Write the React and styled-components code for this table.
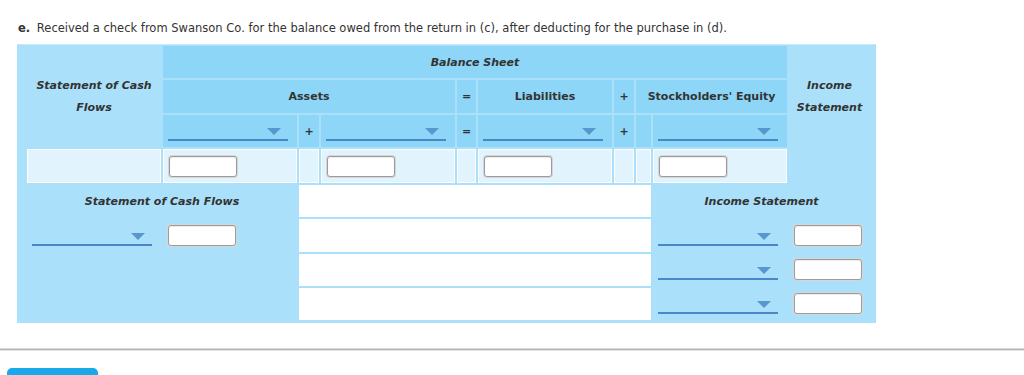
import React from "react";
import styled, { createGlobalStyle } from "styled-components";

const Global = createGlobalStyle`
  html, body { margin: 0; padding: 0; background: #fff; }
  body { font-family: "DejaVu Sans", Verdana, sans-serif; color: #333; }
`;

const Page = styled.div`
  padding-top: 20px;
  overflow: hidden;
  height: 375px;
  box-sizing: border-box;
`;

const Prompt = styled.p`
  margin: 0 0 8px 18px;
  font-size: 11.5px;
  line-height: 16px;
  color: #333;
  strong { margin-right: 3px; }
`;

const Worksheet = styled.div`
  margin-left: 17px;
  width: 859px;
  box-sizing: border-box;
  background: #aae0fa;
  border-top: 1px solid #c4eafc;
  padding: 1px 6px 3px 10px;
  display: grid;
  grid-template-columns: 134px 134px 20px 134px 19px 134px 20px 15px 134px 81px;
  grid-template-rows: 32px 33px 32px 34px 32px 33px 32px 32px;
  gap: 2px;
  font-size: 11px;
`;

const Cell = styled.div`
  grid-column: ${(p) => p.$c};
  grid-row: ${(p) => p.$r};
  min-width: 0;
  box-sizing: border-box;
`;

const SideHead = styled(Cell)`
  display: flex;
  align-items: center;
  justify-content: center;
  text-align: center;
  font-weight: bold;
  font-style: italic;
  line-height: 22px;
`;

const HeadCell = styled(Cell)`
  background: #8dd6f7;
  display: flex;
  align-items: center;
  justify-content: center;
  font-weight: bold;
  font-style: ${(p) => (p.$italic ? "italic" : "normal")};
  white-space: nowrap;
`;

const PickCell = styled(Cell)`
  background: ${(p) => (p.$plain ? "transparent" : "#8dd6f7")};
  display: flex;
  align-items: flex-end;
  justify-content: flex-start;
  padding: 0 0 6px 5px;
`;

const DataCell = styled(Cell)`
  background: #e1f4fd;
  border: 1px solid #fff;
  display: flex;
  align-items: center;
  padding-left: 5px;
`;

const SectionTitle = styled(Cell)`
  display: flex;
  align-items: center;
  justify-content: center;
  font-weight: bold;
  font-style: italic;
`;

const BlankRow = styled(Cell)`
  background: #fff;
`;

const Dropdown = styled.div`
  width: 120px;
  height: 18px;
  box-sizing: border-box;
  border-bottom: 2px solid #4a87c6;
  display: flex;
  align-items: center;
  justify-content: flex-end;
  padding-right: 7px;
`;

const Caret = styled.span`
  width: 0;
  height: 0;
  border-left: 7px solid transparent;
  border-right: 7px solid transparent;
  border-top: 7px solid #5796cf;
`;

const Amount = styled.div`
  width: 68px;
  height: 21px;
  box-sizing: border-box;
  background: #fff;
  border: 1px solid #9c9c9c;
  border-radius: 3px;
  box-shadow: 0 0 0 1px #d6d6d6, inset 0 1px 1px rgba(0, 0, 0, 0.08);
`;

const Divider = styled.div`
  margin-top: 25px;
  height: 1px;
  background: #b4b4b4;
  border-top: 1px solid #d8d8d8;
  border-bottom: 1px solid #e4e4e4;
`;

const SubmitTab = styled.div`
  margin: 17px 0 0 7px;
  width: 91px;
  height: 30px;
  background: #1ba8e8;
  border-radius: 5px 5px 0 0;
`;

const Select = () => (
  <Dropdown>
    <Caret />
  </Dropdown>
);

export default function App() {
  return (
    <Page>
      <Global />
      <Prompt>
        <strong>e.</strong> Received a check from Swanson Co. for the balance owed from the
        return in (c), after deducting for the purchase in (d).
      </Prompt>

      <Worksheet>
        {/* column headings */}
        <SideHead $c="1" $r="1 / 4">
          Statement of Cash
          <br />
          Flows
        </SideHead>
        <HeadCell $c="2 / 10" $r="1" $italic>
          Balance Sheet
        </HeadCell>
        <SideHead $c="10" $r="1 / 4">
          Income
          <br />
          Statement
        </SideHead>

        <HeadCell $c="2 / 5" $r="2">Assets</HeadCell>
        <HeadCell $c="5" $r="2">=</HeadCell>
        <HeadCell $c="6" $r="2">Liabilities</HeadCell>
        <HeadCell $c="7" $r="2">+</HeadCell>
        <HeadCell $c="8 / 10" $r="2">Stockholders' Equity</HeadCell>

        {/* account pickers */}
        <PickCell $c="2" $r="3"><Select /></PickCell>
        <HeadCell $c="3" $r="3">+</HeadCell>
        <PickCell $c="4" $r="3"><Select /></PickCell>
        <HeadCell $c="5" $r="3">=</HeadCell>
        <PickCell $c="6" $r="3"><Select /></PickCell>
        <HeadCell $c="7" $r="3">+</HeadCell>
        <HeadCell $c="8" $r="3" />
        <PickCell $c="9" $r="3"><Select /></PickCell>

        {/* amounts */}
        <DataCell $c="1" $r="4" />
        <DataCell $c="2" $r="4"><Amount /></DataCell>
        <DataCell $c="3" $r="4" />
        <DataCell $c="4" $r="4"><Amount /></DataCell>
        <DataCell $c="5" $r="4" />
        <DataCell $c="6" $r="4"><Amount /></DataCell>
        <DataCell $c="7" $r="4" />
        <DataCell $c="8" $r="4" />
        <DataCell $c="9" $r="4"><Amount /></DataCell>

        {/* statement detail */}
        <SectionTitle $c="1 / 3" $r="5">Statement of Cash Flows</SectionTitle>
        <SectionTitle $c="9 / 11" $r="5">Income Statement</SectionTitle>

        {[5, 6, 7, 8].map((r) => (
          <BlankRow key={r} $c="3 / 9" $r={String(r)} />
        ))}

        <PickCell $c="1" $r="6" $plain><Select /></PickCell>
        <PickCell $c="2" $r="6" $plain><Amount /></PickCell>

        {[6, 7, 8].map((r) => (
          <React.Fragment key={r}>
            <PickCell $c="9" $r={String(r)} $plain><Select /></PickCell>
            <PickCell $c="10" $r={String(r)} $plain><Amount /></PickCell>
          </React.Fragment>
        ))}
      </Worksheet>

      <Divider />
      <SubmitTab />
    </Page>
  );
}
